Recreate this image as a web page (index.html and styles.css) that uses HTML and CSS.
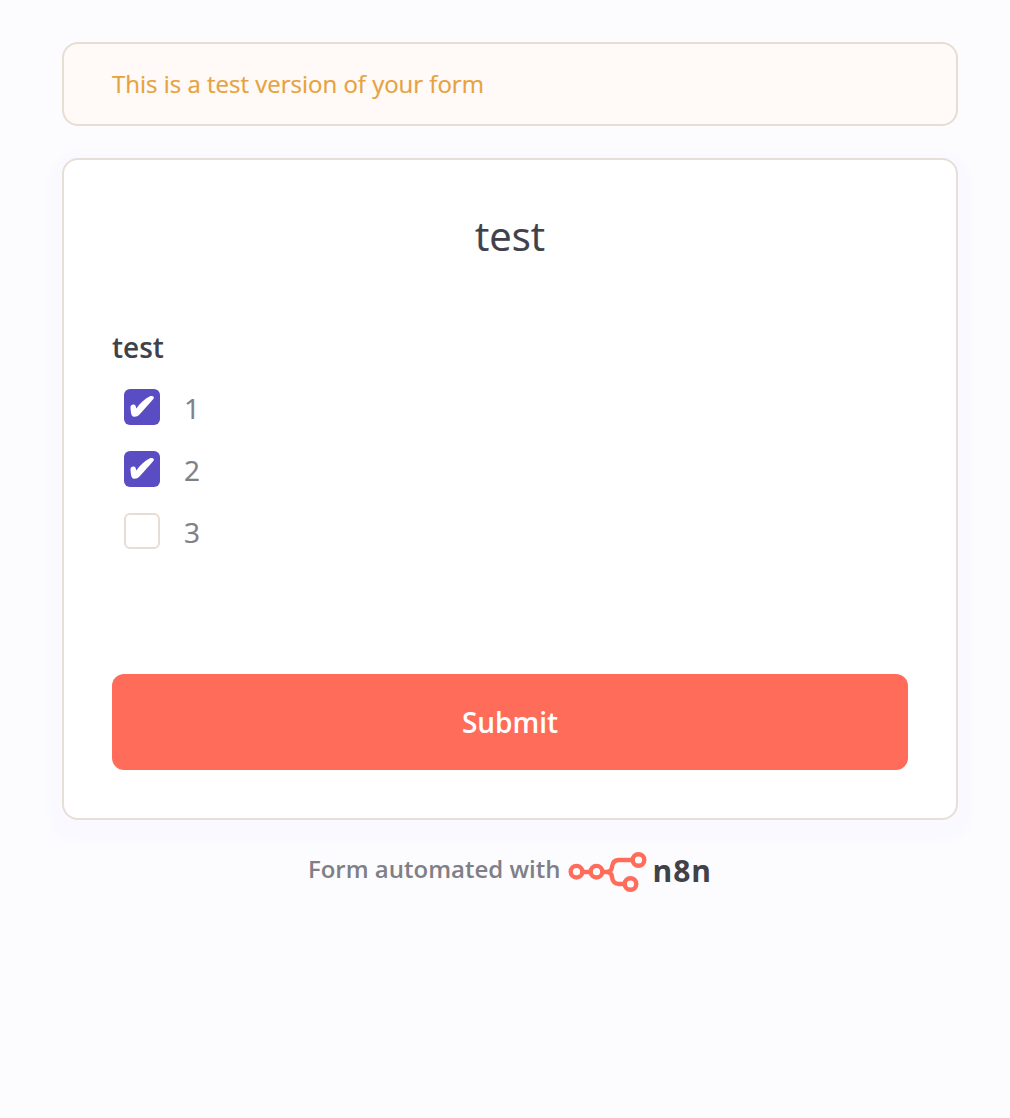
FILE: index.html
```html
<!DOCTYPE html>
<html lang="en">
<head>
<meta charset="utf-8">
<title>test</title>
<link rel="stylesheet" href="styles.css">
</head>
<body>
<main class="container">
  <div class="notice">This is a test version of your form</div>
  <form class="card">
    <h1 class="title">test</h1>
    <div class="group-label">test</div>
    <div class="options">
      <label class="option"><span class="box checked"><svg viewBox="0 0 36 36"><path d="M6.500 18.500C6 15.200 11.200 14.500 11.800 17.500L12.300 19.500C16 14.500 20.500 10 26 7.300C28 6.500 30.500 7 29.700 9.500C25 15 21 19.500 15.500 25.500C13.500 27.500 11.500 28 9 27.500C7 26.500 6.700 22 6.500 18.500Z"/></svg></span><span class="option-text">1</span></label>
      <label class="option"><span class="box checked"><svg viewBox="0 0 36 36"><path d="M6.500 18.500C6 15.200 11.200 14.500 11.800 17.500L12.300 19.500C16 14.500 20.500 10 26 7.300C28 6.500 30.500 7 29.700 9.500C25 15 21 19.500 15.500 25.500C13.500 27.500 11.500 28 9 27.500C7 26.500 6.700 22 6.500 18.500Z"/></svg></span><span class="option-text">2</span></label>
      <label class="option"><span class="box"></span><span class="option-text">3</span></label>
    </div>
    <button class="submit" type="button">Submit</button>
  </form>
  <footer class="footer">
    <span class="credit">Form automated with</span>
    <svg class="logo" viewBox="0 0 80 42"><g fill="none" stroke="#ff6d5a" stroke-width="4.400"><circle cx="8.500" cy="20.700" r="5.800"/><circle cx="28.500" cy="20.700" r="5.800"/><circle cx="70.500" cy="9" r="5.800"/><circle cx="62.500" cy="33" r="5.800"/><path d="M14.500 21h8M34.500 21H38.500Q43.500 21 44 16V15.500Q45 9 51 9H64.500M38.500 21Q43.500 21 44 26V26.500Q45 33 51 33H56.500"/></g></svg>
    <span class="brand">n8n</span>
  </footer>
</main>
</body>
</html>
```
FILE: styles.css
```css
* { box-sizing: border-box; }
body { margin: 0; background: #fcfcfe; font-family: "Open Sans", sans-serif; color: #414249; }
.container { width: 896px; margin: 0 0 0 62px; padding-top: 42px; }
.notice { height: 84px; padding: 0 48px; border: 2px solid #e7ddd2; border-radius: 16px; background: #fffaf7; color: #e6a23d; font-size: 24px; line-height: 80px; -webkit-text-stroke: 0.2px; }
.card { height: 662px; margin-top: 32px; padding: 46px 48px 48px; border: 2px solid #e7ded8; border-radius: 16px; background: #fff; box-shadow: 0 8px 6px 14px #faf9ff; }
.title { margin: 0; font-size: 40px; font-weight: 400; line-height: 60px; text-align: center; color: #414149; -webkit-text-stroke: 0.2px; }
.group-label { margin-top: 62px; font-size: 28px; font-weight: 600; line-height: 38px; color: #414149; }
.options { padding: 23px 0 0 12px; display: flex; flex-direction: column; gap: 26px; }
.option { height: 36px; display: flex; align-items: center; gap: 24px; font-size: 28px; color: #7f8087; }
.option-text { padding-top: 2px; -webkit-text-stroke: 0.2px; }
.box { width: 36px; height: 36px; border: 2px solid #e7ddd5; border-radius: 6px; }
.checked { border: 0; background: #5a4cc2; }
.checked svg { display: block; fill: #fff; }
.submit { display: block; width: 100%; height: 96px; margin-top: 125px; padding: 0; border: 0; border-radius: 12px; background: #ff6d5a; color: #fff; font: 600 28px "Open Sans", sans-serif; }
.footer { display: flex; justify-content: center; margin-top: 31px; height: 42px; }
.credit { font-size: 24px; font-weight: 600; line-height: 36px; color: #7f8087; }
.logo { width: 80px; height: 42px; margin-left: 8px; }
.brand { margin-left: 4px; font-size: 30px; font-weight: 700; line-height: 40px; letter-spacing: 1px; color: #414149; }
```
